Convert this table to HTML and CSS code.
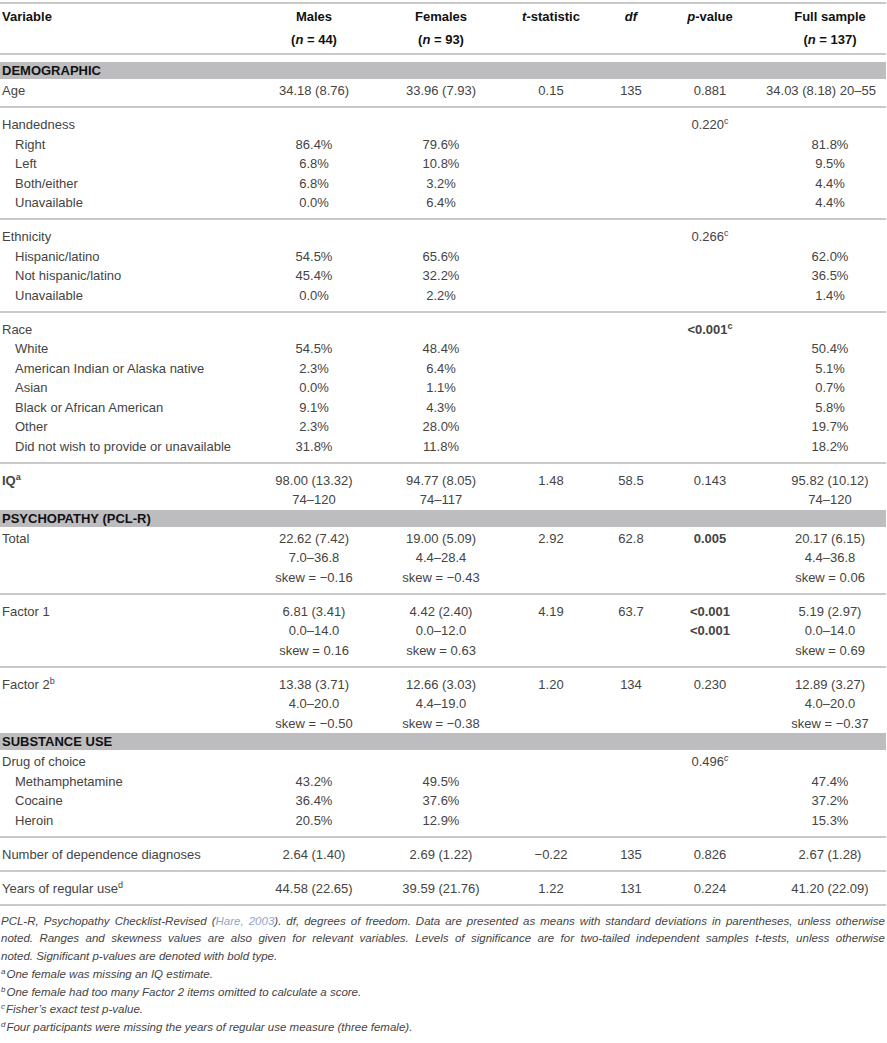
FILE: index.html
```html
<!DOCTYPE html>
<html lang="en">
<head>
  <meta charset="UTF-8" />
  <meta name="viewport" content="width=device-width, initial-scale=1.0"/>
  <title>Participant characteristics</title>
  <link rel="stylesheet" href="styles.css">
</head>
<body>
  <table class="stats">
    <colgroup>
      <col class="c-var"><col class="c-m"><col class="c-f"><col class="c-t"><col class="c-df"><col class="c-p"><col class="c-full">
    </colgroup>
    <thead>
      <tr>
        <th class="var">Variable</th>
        <th>Males<br>(<i>n</i> = 44)</th>
        <th>Females<br>(<i>n</i> = 93)</th>
        <th><i>t</i>-statistic</th>
        <th><i>df</i></th>
        <th><i>p</i>-value</th>
        <th class="full">Full sample<br>(<i>n</i> = 137)</th>
      </tr>
    </thead>

    <tbody class="band top">
      <tr><th colspan="7">DEMOGRAPHIC</th></tr>
    </tbody>
    <tbody class="grp first">
      <tr><td class="var">Age</td><td>34.18 (8.76)</td><td>33.96 (7.93)</td><td>0.15</td><td>135</td><td>0.881</td><td>34.03 (8.18) 20–55</td></tr>
    </tbody>
    <tbody class="grp">
      <tr><td class="var">Handedness</td><td></td><td></td><td></td><td></td><td>0.220<sup>c</sup></td><td class="full"></td></tr>
      <tr><td class="var sub">Right</td><td>86.4%</td><td>79.6%</td><td></td><td></td><td></td><td class="full">81.8%</td></tr>
      <tr><td class="var sub">Left</td><td>6.8%</td><td>10.8%</td><td></td><td></td><td></td><td class="full">9.5%</td></tr>
      <tr><td class="var sub">Both/either</td><td>6.8%</td><td>3.2%</td><td></td><td></td><td></td><td class="full">4.4%</td></tr>
      <tr><td class="var sub">Unavailable</td><td>0.0%</td><td>6.4%</td><td></td><td></td><td></td><td class="full">4.4%</td></tr>
    </tbody>
    <tbody class="grp">
      <tr><td class="var">Ethnicity</td><td></td><td></td><td></td><td></td><td>0.266<sup>c</sup></td><td class="full"></td></tr>
      <tr><td class="var sub">Hispanic/latino</td><td>54.5%</td><td>65.6%</td><td></td><td></td><td></td><td class="full">62.0%</td></tr>
      <tr><td class="var sub">Not hispanic/latino</td><td>45.4%</td><td>32.2%</td><td></td><td></td><td></td><td class="full">36.5%</td></tr>
      <tr><td class="var sub">Unavailable</td><td>0.0%</td><td>2.2%</td><td></td><td></td><td></td><td class="full">1.4%</td></tr>
    </tbody>
    <tbody class="grp">
      <tr><td class="var">Race</td><td></td><td></td><td></td><td></td><td><b>&lt;0.001<sup>c</sup></b></td><td class="full"></td></tr>
      <tr><td class="var sub">White</td><td>54.5%</td><td>48.4%</td><td></td><td></td><td></td><td class="full">50.4%</td></tr>
      <tr><td class="var sub">American Indian or Alaska native</td><td>2.3%</td><td>6.4%</td><td></td><td></td><td></td><td class="full">5.1%</td></tr>
      <tr><td class="var sub">Asian</td><td>0.0%</td><td>1.1%</td><td></td><td></td><td></td><td class="full">0.7%</td></tr>
      <tr><td class="var sub">Black or African American</td><td>9.1%</td><td>4.3%</td><td></td><td></td><td></td><td class="full">5.8%</td></tr>
      <tr><td class="var sub">Other</td><td>2.3%</td><td>28.0%</td><td></td><td></td><td></td><td class="full">19.7%</td></tr>
      <tr><td class="var sub">Did not wish to provide or unavailable</td><td>31.8%</td><td>11.8%</td><td></td><td></td><td></td><td class="full">18.2%</td></tr>
    </tbody>
    <tbody class="grp last">
      <tr><td class="var"><b>IQ<sup>a</sup></b></td><td>98.00 (13.32)<br>74–120</td><td>94.77 (8.05)<br>74–117</td><td>1.48</td><td>58.5</td><td>0.143</td><td class="full">95.82 (10.12)<br>74–120</td></tr>
    </tbody>

    <tbody class="band">
      <tr><th colspan="7">PSYCHOPATHY (PCL-R)</th></tr>
    </tbody>
    <tbody class="grp first">
      <tr><td class="var">Total</td><td>22.62 (7.42)<br>7.0–36.8<br>skew = −0.16</td><td>19.00 (5.09)<br>4.4–28.4<br>skew = −0.43</td><td>2.92</td><td>62.8</td><td><b>0.005</b></td><td class="full">20.17 (6.15)<br>4.4–36.8<br>skew = 0.06</td></tr>
    </tbody>
    <tbody class="grp">
      <tr><td class="var">Factor 1</td><td>6.81 (3.41)<br>0.0–14.0<br>skew = 0.16</td><td>4.42 (2.40)<br>0.0–12.0<br>skew = 0.63</td><td>4.19</td><td>63.7</td><td><b>&lt;0.001<br>&lt;0.001</b></td><td class="full">5.19 (2.97)<br>0.0–14.0<br>skew = 0.69</td></tr>
    </tbody>
    <tbody class="grp last">
      <tr><td class="var">Factor 2<sup>b</sup></td><td>13.38 (3.71)<br>4.0–20.0<br>skew = −0.50</td><td>12.66 (3.03)<br>4.4–19.0<br>skew = −0.38</td><td>1.20</td><td>134</td><td>0.230</td><td class="full">12.89 (3.27)<br>4.0–20.0<br>skew = −0.37</td></tr>
    </tbody>

    <tbody class="band">
      <tr><th colspan="7">SUBSTANCE USE</th></tr>
    </tbody>
    <tbody class="grp first">
      <tr><td class="var">Drug of choice</td><td></td><td></td><td></td><td></td><td>0.496<sup><i>c</i></sup></td><td class="full"></td></tr>
      <tr><td class="var sub">Methamphetamine</td><td>43.2%</td><td>49.5%</td><td></td><td></td><td></td><td class="full">47.4%</td></tr>
      <tr><td class="var sub">Cocaine</td><td>36.4%</td><td>37.6%</td><td></td><td></td><td></td><td class="full">37.2%</td></tr>
      <tr><td class="var sub">Heroin</td><td>20.5%</td><td>12.9%</td><td></td><td></td><td></td><td class="full">15.3%</td></tr>
    </tbody>
    <tbody class="grp">
      <tr><td class="var">Number of dependence diagnoses</td><td>2.64 (1.40)</td><td>2.69 (1.22)</td><td>−0.22</td><td>135</td><td>0.826</td><td class="full">2.67 (1.28)</td></tr>
    </tbody>
    <tbody class="grp end">
      <tr><td class="var">Years of regular use<sup>d</sup></td><td>44.58 (22.65)</td><td>39.59 (21.76)</td><td>1.22</td><td>131</td><td>0.224</td><td class="full">41.20 (22.09)</td></tr>
    </tbody>
  </table>

  <div class="notes">
    <p>
      <span class="jl">PCL-R, Psychopathy Checklist-Revised (<a class="ref">Hare, 2003</a>). df, degrees of freedom. Data are presented as means with standard deviations in parentheses, unless otherwise</span>
      <span class="jl">noted. Ranges and skewness values are also given for relevant variables. Levels of significance are for two-tailed independent samples t-tests, unless otherwise</span>
      noted. Significant p-values are denoted with bold type.
    </p>
    <p><sup>a</sup>One female was missing an IQ estimate.</p>
    <p><sup>b</sup>One female had too many Factor 2 items omitted to calculate a score.</p>
    <p><sup>c</sup>Fisher’s exact test p-value.</p>
    <p><sup>d</sup>Four participants were missing the years of regular use measure (three female).</p>
  </div>
</body>
</html>
```

FILE: styles.css
```css
body {
  margin: 0;
  font-family: "Liberation Sans", Arial, sans-serif;
  color: #444;
  background: #fff;
}
.stats {
  width: 886px;
  margin-top: 2px;
  border-collapse: separate;
  border-spacing: 0;
  table-layout: fixed;
  font-size: 13px;
}
.c-var { width: 250px; }
.c-m { width: 128px; }
.c-f { width: 126px; }
.c-t { width: 94px; }
.c-df { width: 66px; }
.c-p { width: 92px; }
.c-full { width: 130px; }

.stats th,
.stats td {
  padding: 0;
  line-height: 19.5px;
  text-align: center;
  vertical-align: top;
  white-space: nowrap;
  font-weight: normal;
}
.stats .var {
  text-align: left;
  padding-left: 2px;
}
.stats .sub {
  padding-left: 15px;
}
.stats .full {
  padding-left: 18px;
}

/* header */
.stats thead th {
  line-height: 23px;
  font-weight: bold;
  color: #111;
  border-top: 2px solid #c9c9c9;
  border-bottom: 2px solid #c9c9c9;
  padding-top: 0.5px;
  padding-bottom: 2.5px;
}
.stats thead th.var {
  padding-left: 2px;
}

/* section bands */
.band th {
  text-align: left;
  line-height: 17px;
  padding-left: 2px;
  font-weight: bold;
  color: #111;
  background: #bdbdbf;
  background-clip: padding-box;
}
.band.top th {
  border-top: 7px solid transparent;
}

/* row groups */
.grp tr:first-child td {
  padding-top: 7px;
  border-top: 2px solid #c9c9c9;
}
.grp tr:first-child td.sub { padding-top: 7px; }
.grp tr:last-child td {
  padding-bottom: 5.5px;
}
.grp.first tr:first-child td {
  padding-top: 2px;
  border-top: none;
}
.grp.last tr:last-child td {
  padding-bottom: 0;
}
.grp.end tr:last-child td {
  border-bottom: 2px solid #c9c9c9;
}

sup {
  font-size: 9px;
  line-height: 0;
  vertical-align: 5px;
}

/* footnotes */
.notes {
  width: 884px;
  margin: 7px 0 0 1px;
  font-size: 11.5px;
  font-style: italic;
  line-height: 17.8px;
  color: #444;
}
.notes p {
  margin: 0;
}
.notes .jl {
  display: block;
  text-align: justify;
  text-align-last: justify;
}
.notes sup {
  font-size: 8px;
  vertical-align: 4px;
  margin-right: 1px;
}
.ref {
  color: #8ea6c9;
}
```
